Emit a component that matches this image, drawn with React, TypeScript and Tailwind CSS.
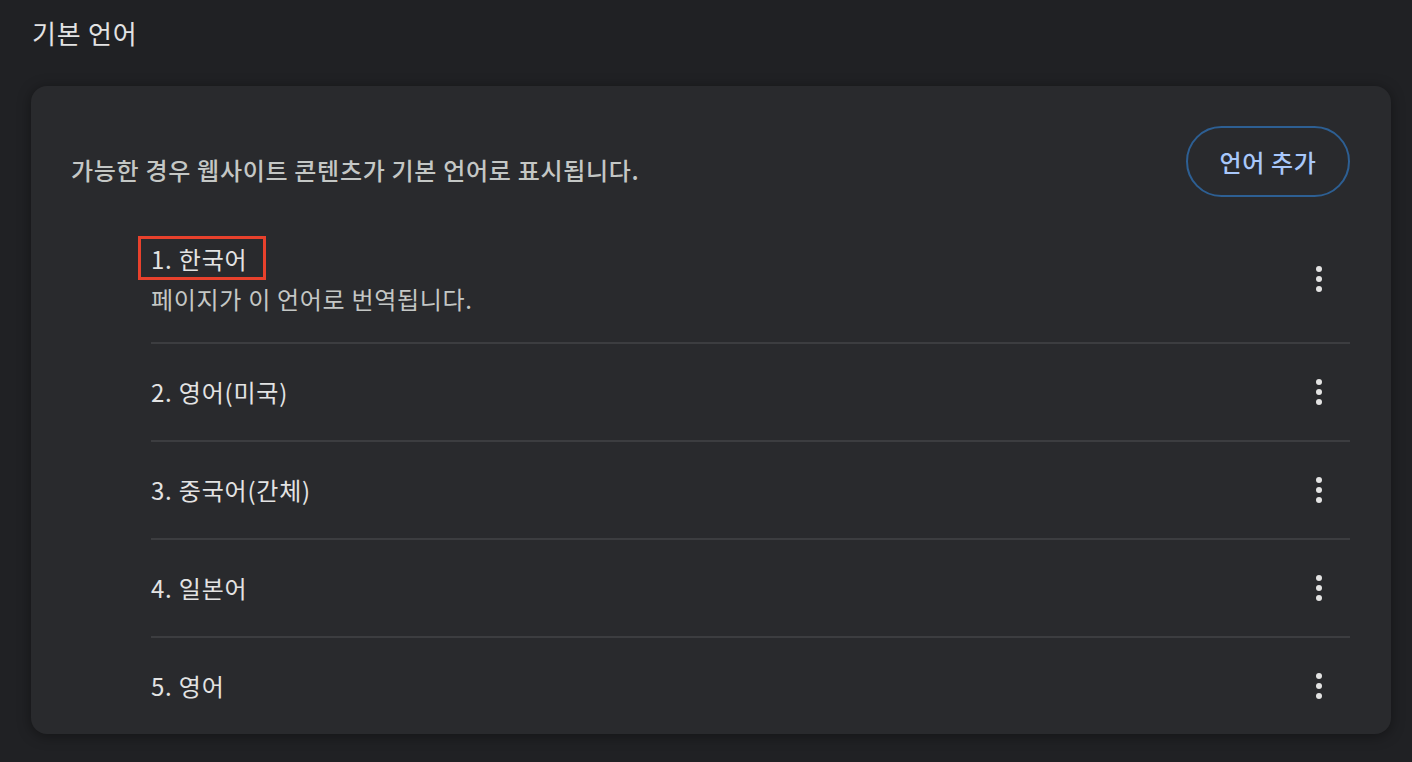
import React from "react";

const languages = [
  { name: "1. 한국어", note: "페이지가 이 언어로 번역됩니다." },
  { name: "2. 영어(미국)" },
  { name: "3. 중국어(간체)" },
  { name: "4. 일본어" },
  { name: "5. 영어" },
];

function Kebab() {
  return (
    <button className="flex h-12 w-12 flex-col items-center justify-center gap-[4px] rounded-full">
      <span className="h-[6px] w-[6px] rounded-full bg-[#e3e3e3]" />
      <span className="h-[6px] w-[6px] rounded-full bg-[#e3e3e3]" />
      <span className="h-[6px] w-[6px] rounded-full bg-[#e3e3e3]" />
    </button>
  );
}

export default function App() {
  return (
    <div
      className="min-h-[762px] bg-[#202124] pr-[21px] pl-[31px] text-[#e3e3e3]"
      style={{ fontFamily: '"Noto Sans CJK KR", "Noto Sans", sans-serif' }}
    >
      <h2 className="pt-[14px] pl-px text-[26px] leading-[38px] font-normal tracking-[0.8px] text-[#e3e3e3]">
        기본 언어
      </h2>

      <div className="mt-[34px] rounded-2xl bg-[#292a2d] shadow-[0_2px_14px_rgba(0,0,0,0.4)]">
        {/* header */}
        <div className="flex items-center justify-between pt-[40px] pr-[41px] pl-[40px]">
          <p className="pt-[16px] text-[24px] leading-[32px] font-medium tracking-[0.7px] text-[#c4c7c5]">
            가능한 경우 웹사이트 콘텐츠가 기본 언어로 표시됩니다.
          </p>
          <button className="flex h-[71px] w-[164px] items-center justify-center rounded-full border-2 border-[#2d5f93] text-[24px] font-medium tracking-[0.7px] text-[#a8c7fa]">
            언어 추가
          </button>
        </div>

        {/* list */}
        <div className="mt-[19px] mr-[41px] ml-[120px]">
          {languages.map((lang, i) => (
            <div
              key={lang.name}
              className={`flex items-center justify-between ${
                i === 0 ? "h-[126px]" : "h-[98px] border-t-2 border-[#3c3d40]"
              }`}
            >
              <div className="flex flex-col">
                <span className="relative self-start text-[24px] leading-[40px] tracking-[0.8px] text-[#e3e3e3]">
                  {lang.name}
                  {i === 0 && (
                    <span className="pointer-events-none absolute -top-[3px] -right-[19px] -bottom-px -left-[13px] border-[3px] border-[#e8412c]" />
                  )}
                </span>
                {lang.note && (
                  <span className="text-[24px] leading-[40px] tracking-[0.7px] text-[#c4c7c5]">{lang.note}</span>
                )}
              </div>
              <div className="mr-[7px]">
                <Kebab />
              </div>
            </div>
          ))}
        </div>
      </div>
    </div>
  );
}
